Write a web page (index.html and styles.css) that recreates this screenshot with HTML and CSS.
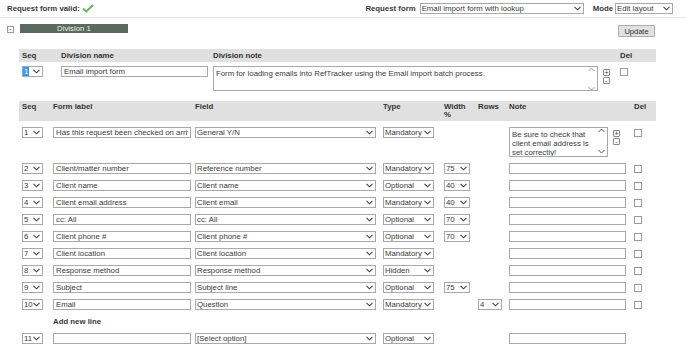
FILE: index.html
```html
<!DOCTYPE html>
<html lang="en">
<head>
    <meta charset="UTF-8">
    <title>Request form layout</title>
    <link rel="stylesheet" href="styles.css">
</head>
<body>
    <div class="topbar">
        <span class="valid">Request form valid:
            <svg class="tick" width="12" height="9" viewBox="0 0 12 9"><path d="M1 4.5 L4.3 7.5 L11 1" fill="none" stroke="#5cb85c" stroke-width="2"/></svg>
        </span>
        <span class="spacer"></span>
        <label class="top-label">Request form</label>
        <select class="sel sel-form"><option>Email import form with lookup</option></select>
        <label class="top-label mode-label">Mode</label>
        <select class="sel sel-mode"><option>Edit layout</option></select>
    </div>

    <div class="division-head">
        <span class="toggle">-</span>
        <span class="division-bar">Division 1</span>
        <span class="spacer"></span>
        <button class="update-btn">Update</button>
    </div>

    <table class="grid division-table">
        <colgroup>
            <col style="width:39px"><col style="width:152px"><col style="width:407px"><col style="width:39px">
        </colgroup>
        <tr>
            <th>Seq</th><th>Division name</th><th>Division note</th><th>Del</th>
        </tr>
        <tr class="first">
            <td><select class="sel sel-seq focused"><option>1</option></select></td>
            <td><input class="txt name-input" type="text" value="Email import form"></td>
            <td>
                <div class="note-cell">
                    <span class="ta-wrap">
                        <textarea class="ta div-note">Form for loading emails into RefTracker using the Email import batch process.</textarea>
                        <svg class="ta-arrows" width="7" height="24" viewBox="0 0 7 24"><path d="M0.5 4 L3.5 1 L6.5 4" fill="none" stroke="#999" stroke-width="1"/><path d="M0.5 20 L3.5 23 L6.5 20" fill="none" stroke="#999" stroke-width="1"/></svg>
                    </span>
                    <span class="pm"><span class="pm-btn">+</span><span class="pm-btn">-</span></span>
                </div>
            </td>
            <td><input class="chk" type="checkbox"></td>
        </tr>
    </table>

    <table class="grid field-table">
        <colgroup>
            <col style="width:31px"><col style="width:142px"><col style="width:188px"><col style="width:61px">
            <col style="width:34px"><col style="width:31px"><col style="width:125px"><col style="width:25px">
        </colgroup>
        <tr>
            <th>Seq</th><th>Form label</th><th>Field</th><th>Type</th><th>Width<br>%</th><th>Rows</th><th>Note</th><th>Del</th>
        </tr>
        <tr class="first">
            <td><select class="sel sel-seq"><option>1</option></select></td>
            <td><input class="txt label-input" type="text" value="Has this request been checked on arrival?"></td>
            <td><select class="sel sel-field"><option>General Y/N</option></select></td>
            <td><select class="sel sel-type"><option>Mandatory</option></select></td>
            <td></td>
            <td></td>
            <td>
                <div class="note-cell">
                    <span class="ta-wrap">
                        <textarea class="ta row-note">Be sure to check that client email address is set correctly!</textarea>
                        <svg class="ta-arrows" width="7" height="26" viewBox="0 0 7 26"><path d="M0.5 4 L3.5 1 L6.5 4" fill="none" stroke="#555" stroke-width="1"/><path d="M0.5 22 L3.5 25 L6.5 22" fill="none" stroke="#555" stroke-width="1"/></svg>
                    </span>
                    <span class="pm"><span class="pm-btn">+</span><span class="pm-btn">-</span></span>
                </div>
            </td>
            <td><input class="chk" type="checkbox"></td>
        </tr>
        <tr>
            <td><select class="sel sel-seq"><option>2</option></select></td>
            <td><input class="txt label-input" type="text" value="Client/matter number"></td>
            <td><select class="sel sel-field"><option>Reference number</option></select></td>
            <td><select class="sel sel-type"><option>Mandatory</option></select></td>
            <td><select class="sel sel-width"><option>75</option></select></td>
            <td></td>
            <td><input class="txt note-input" type="text"></td>
            <td><input class="chk" type="checkbox"></td>
        </tr>
        <tr>
            <td><select class="sel sel-seq"><option>3</option></select></td>
            <td><input class="txt label-input" type="text" value="Client name"></td>
            <td><select class="sel sel-field"><option>Client name</option></select></td>
            <td><select class="sel sel-type"><option>Optional</option></select></td>
            <td><select class="sel sel-width"><option>40</option></select></td>
            <td></td>
            <td><input class="txt note-input" type="text"></td>
            <td><input class="chk" type="checkbox"></td>
        </tr>
        <tr>
            <td><select class="sel sel-seq"><option>4</option></select></td>
            <td><input class="txt label-input" type="text" value="Client email address"></td>
            <td><select class="sel sel-field"><option>Client email</option></select></td>
            <td><select class="sel sel-type"><option>Mandatory</option></select></td>
            <td><select class="sel sel-width"><option>40</option></select></td>
            <td></td>
            <td><input class="txt note-input" type="text"></td>
            <td><input class="chk" type="checkbox"></td>
        </tr>
        <tr>
            <td><select class="sel sel-seq"><option>5</option></select></td>
            <td><input class="txt label-input" type="text" value="cc: All"></td>
            <td><select class="sel sel-field"><option>cc: All</option></select></td>
            <td><select class="sel sel-type"><option>Optional</option></select></td>
            <td><select class="sel sel-width"><option>70</option></select></td>
            <td></td>
            <td><input class="txt note-input" type="text"></td>
            <td><input class="chk" type="checkbox"></td>
        </tr>
        <tr>
            <td><select class="sel sel-seq"><option>6</option></select></td>
            <td><input class="txt label-input" type="text" value="Client phone #"></td>
            <td><select class="sel sel-field"><option>Client phone #</option></select></td>
            <td><select class="sel sel-type"><option>Optional</option></select></td>
            <td><select class="sel sel-width"><option>70</option></select></td>
            <td></td>
            <td><input class="txt note-input" type="text"></td>
            <td><input class="chk" type="checkbox"></td>
        </tr>
        <tr>
            <td><select class="sel sel-seq"><option>7</option></select></td>
            <td><input class="txt label-input" type="text" value="Client location"></td>
            <td><select class="sel sel-field"><option>Client location</option></select></td>
            <td><select class="sel sel-type"><option>Mandatory</option></select></td>
            <td></td>
            <td></td>
            <td><input class="txt note-input" type="text"></td>
            <td><input class="chk" type="checkbox"></td>
        </tr>
        <tr>
            <td><select class="sel sel-seq"><option>8</option></select></td>
            <td><input class="txt label-input" type="text" value="Response method"></td>
            <td><select class="sel sel-field"><option>Response method</option></select></td>
            <td><select class="sel sel-type"><option>Hidden</option></select></td>
            <td></td>
            <td></td>
            <td><input class="txt note-input" type="text"></td>
            <td><input class="chk" type="checkbox"></td>
        </tr>
        <tr>
            <td><select class="sel sel-seq"><option>9</option></select></td>
            <td><input class="txt label-input" type="text" value="Subject"></td>
            <td><select class="sel sel-field"><option>Subject line</option></select></td>
            <td><select class="sel sel-type"><option>Optional</option></select></td>
            <td><select class="sel sel-width"><option>75</option></select></td>
            <td></td>
            <td><input class="txt note-input" type="text"></td>
            <td><input class="chk" type="checkbox"></td>
        </tr>
        <tr>
            <td><select class="sel sel-seq"><option>10</option></select></td>
            <td><input class="txt label-input" type="text" value="Email"></td>
            <td><select class="sel sel-field"><option>Question</option></select></td>
            <td><select class="sel sel-type"><option>Mandatory</option></select></td>
            <td></td>
            <td><select class="sel sel-rows"><option>4</option></select></td>
            <td><input class="txt note-input" type="text"></td>
            <td><input class="chk" type="checkbox"></td>
        </tr>
        <tr>
            <td></td>
            <td class="add-line">Add new line</td>
            <td></td><td></td><td></td><td></td><td></td><td></td>
        </tr>
        <tr>
            <td><select class="sel sel-seq"><option>11</option></select></td>
            <td><input class="txt label-input" type="text"></td>
            <td><select class="sel sel-field"><option>[Select option]</option></select></td>
            <td><select class="sel sel-type"><option>Optional</option></select></td>
            <td></td>
            <td></td>
            <td><input class="txt note-input" type="text"></td>
            <td></td>
        </tr>
    </table>
</body>
</html>
```

FILE: styles.css
```css
body {
    margin: 0;
    font-family: "Liberation Sans", Arial, sans-serif;
    font-size: 7.8px;
    color: #3a3a3a;
    background: #fff;
}
.topbar {
    display: flex;
    align-items: center;
    height: 17px;
    padding: 0 13px 0 7px;
    border-bottom: 1px solid #e2e2e2;
}
.valid {
    font-weight: bold;
    display: flex;
    align-items: center;
}
.tick {
    margin-left: 2px;
}
.spacer {
    flex: 1;
}
.top-label {
    font-weight: bold;
    margin-right: 4px;
}
.mode-label {
    margin-left: 9px;
    margin-right: 2px;
}
.sel {
    -webkit-appearance: none;
    appearance: none;
    box-sizing: border-box;
    height: 11px;
    margin: 0;
    padding: 0 9px 0 1px;
    border: 1px solid #a9a9a9;
    border-radius: 0;
    font-family: inherit;
    font-size: 7.8px;
    line-height: 9px;
    color: #3a3a3a;
    background: #fff url("data:image/svg+xml;utf8,<svg xmlns='http://www.w3.org/2000/svg' width='7' height='5'><path d='M0.5 0.8 L3.5 3.8 L6.5 0.8' fill='none' stroke='%23444' stroke-width='1.1'/></svg>") no-repeat right 2px center;
    display: block;
}
.sel-form {
    width: 164px;
}
.sel-mode {
    width: 58px;
}
.sel-seq {
    width: 21px;
    padding-right: 8px;
}
.sel-seq.focused {
    color: #fff;
    background-image: url("data:image/svg+xml;utf8,<svg xmlns='http://www.w3.org/2000/svg' width='7' height='5'><path d='M0.5 0.8 L3.5 3.8 L6.5 0.8' fill='none' stroke='%23444' stroke-width='1.1'/></svg>"), linear-gradient(#3399ff, #3399ff);
    background-repeat: no-repeat, no-repeat;
    background-position: right 2px center, 0 0;
    background-size: 7px 5px, 6px 9px;
}
.sel-field {
    width: 181px;
}
.sel-type {
    width: 51px;
}
.sel-width {
    width: 26px;
}
.sel-rows {
    width: 24px;
}
.division-head {
    display: flex;
    align-items: flex-start;
    margin-top: 6px;
    padding: 0 31px 0 7px;
    height: 13px;
}
.toggle {
    box-sizing: border-box;
    width: 7px;
    height: 7px;
    margin-top: 2px;
    border: 1px solid #999;
    font-size: 7px;
    line-height: 4px;
    text-align: center;
    color: #333;
}
.division-bar {
    margin-left: 6px;
    width: 108px;
    height: 9px;
    background: #5b6a61;
    color: #e8ece9;
    font-size: 7.8px;
    line-height: 9px;
    text-align: center;
}
.update-btn {
    box-sizing: border-box;
    height: 12px;
    width: 37px;
    margin-top: 1px;
    padding: 0;
    border: 1px solid #adadad;
    border-radius: 1px;
    background: #e1e1e1;
    font-family: inherit;
    font-size: 7.5px;
    color: #333;
}
.grid {
    table-layout: fixed;
    border-collapse: collapse;
    margin-left: 19px;
    width: 637px;
}
.grid th {
    background: #e0e0e0;
    text-align: left;
    font-weight: bold;
    font-size: 7.8px;
    line-height: 9px;
    padding: 2px 3px;
    vertical-align: top;
    color: #333;
}
.grid td {
    padding: 3px;
    vertical-align: top;
}
.grid tr.first td {
    padding-top: 4px;
}
.division-table {
    margin-top: 12px;
}
.field-table {
    margin-top: 7px;
}
.field-table th {
    line-height: 8px;
}
.field-table tr.first td {
    padding-top: 6px;
}
.txt {
    box-sizing: border-box;
    display: block;
    height: 11px;
    margin: 0;
    padding: 0 2px;
    border: 1px solid #a9a9a9;
    font-family: inherit;
    font-size: 7.8px;
    color: #3a3a3a;
    background: #fff;
}
.name-input {
    width: 147px;
}
.label-input {
    width: 138px;
}
.note-input {
    width: 117px;
}
.note-cell {
    display: flex;
    align-items: flex-start;
}
.ta-wrap {
    position: relative;
    display: block;
}
.ta {
    box-sizing: border-box;
    display: block;
    margin: 0;
    padding: 2px 12px 2px 2px;
    border: 1px solid #a9a9a9;
    font-family: inherit;
    font-size: 7.8px;
    line-height: 9px;
    color: #3a3a3a;
    resize: none;
    overflow: hidden;
}
.div-note {
    width: 385px;
    height: 25px;
}
.row-note {
    width: 99px;
    height: 30px;
}
.ta-arrows {
    position: absolute;
    right: 3px;
    top: 1px;
}
.pm {
    display: flex;
    flex-direction: column;
    gap: 1px;
    margin-left: 5px;
    margin-top: 3px;
}
.pm-btn {
    box-sizing: border-box;
    width: 7px;
    height: 7px;
    border: 1px solid #888;
    border-radius: 1px;
    font-size: 7px;
    line-height: 5px;
    text-align: center;
    color: #333;
}
.chk {
    -webkit-appearance: none;
    appearance: none;
    box-sizing: border-box;
    display: block;
    width: 8px;
    height: 8px;
    margin: 2px 0 0;
    border: 1px solid #9a9a9a;
    background: #fff;
}
.add-line {
    font-weight: bold;
    line-height: 11px;
}
```
